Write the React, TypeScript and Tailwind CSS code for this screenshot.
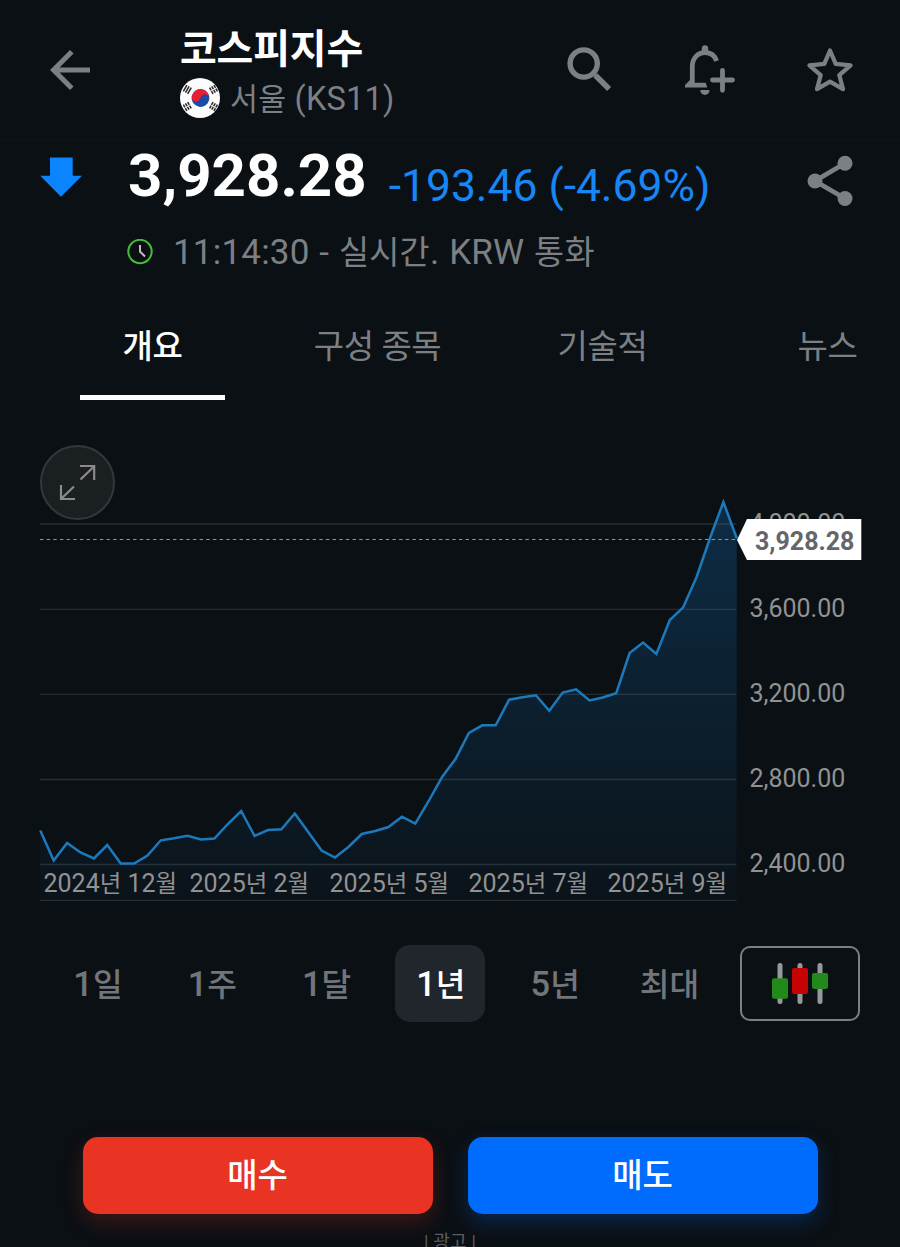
import type { ReactNode } from "react";

const priceLine = [
  830.5, 860.5, 843, 852.5, 858.5, 845, 863.5, 863.5, 855.5, 840.3, 838.3, 835.7, 839.5, 838.5, 824, 811, 836, 830,
  829.3, 813.5, 832, 850.5, 857.5, 847, 834, 831, 827, 816.7, 823.7, 801, 777, 759, 733, 725.3, 725.3, 699.7, 697.3,
  695.3, 710.7, 692.5, 689.3, 700.5, 697.5, 693.3, 653, 642.5, 654, 620, 607.3, 577, 538, 502, 538.5,
];

const CHART_TOP = 440;
const points = priceLine.map((y, i) => `${(40.3 + i * 13.394).toFixed(1)},${(y - CHART_TOP).toFixed(1)}`).join(" ");

const gridLines = [524, 609.3, 694.3, 779.5, 864.5, 900.3];
const yLabels: [string, number][] = [
  ["4,000.00", 532],
  ["3,600.00", 616.7],
  ["3,200.00", 701.8],
  ["2,800.00", 786.8],
  ["2,400.00", 872],
];
const xLabels: [string, string, number][] = [
  ["2024", "12", 43],
  ["2025", "2", 189],
  ["2025", "5", 329],
  ["2025", "7", 468],
  ["2025", "9", 607],
];

function BackIcon() {
  return (
    <svg viewBox="0 0 24 24" className="size-[60px] fill-[#7c8085]">
      <path d="M20 11H7.83l5.59-5.59L12 4l-8 8 8 8 1.41-1.41L7.83 13H20v-2z" />
    </svg>
  );
}

function SearchIcon() {
  return (
    <svg viewBox="560 40 60 60" className="size-[60px]" fill="none" stroke="#7c8085">
      <circle cx="583.7" cy="63.5" r="13.6" strokeWidth="5.4" />
      <path d="M592.500 72.500l3 3" strokeWidth="3" />
      <path d="M595.300 75.300l13.800 13.800" strokeWidth="5.600" />
    </svg>
  );
}

function BellPlusIcon() {
  return (
    <svg viewBox="680 40 60 60" className="size-[60px]" fill="none" stroke="#7c8085" strokeWidth="4.8">
      <path d="M705 48.5v3" strokeWidth="6.4" strokeLinecap="round" />
      <path d="M692.3 84V66.5C692.3 58 698 52.5 705 52.5c5.300 0 9.800 3 11.600 8.600" />
      <path d="M690 77.500v5.200h15.800l1.400 4.800H685v-2.500l5-5z" fill="#7c8085" stroke="none" />
      <path d="M700.300 90h9.200a4.600 5 0 0 1-9.200 0z" fill="#7c8085" stroke="none" />
      <path d="M722.500 70.300v20M712.500 80h20" strokeLinecap="round" />
    </svg>
  );
}

function StarIcon() {
  return (
    <svg viewBox="800 40 60 60" className="size-[60px]" fill="none" stroke="#7c8085" strokeWidth="4.2" strokeLinejoin="round">
      <path d="M830 50.500l5.700 13.400 14.900 1.400-11.300 9.800 3.700 14-13-7.400-13 7.400 3.700-14-11.300-9.800 14.900-1.400z" />
    </svg>
  );
}

function ShareIcon() {
  return (
    <svg viewBox="800 150 60 60" className="size-[60px] fill-[#7c8085]">
      <path d="M845 163.300L815 181l30 17.500" fill="none" stroke="#7c8085" strokeWidth="4.800" />
      <circle cx="845" cy="163.300" r="7.500" />
      <circle cx="815" cy="181" r="7.500" />
      <circle cx="845" cy="198.500" r="7.500" />
    </svg>
  );
}

function Trigram({ x, y, angle, broken }: { x: number; y: number; angle: number; broken: boolean }) {
  return (
    <g transform={`translate(${x} ${y}) rotate(${angle})`} stroke="#26282b" strokeWidth="1.5" strokeDasharray={broken ? "3.3 0.6" : undefined}>
      <path d="M-3.600-2.500h7.200M-3.600 0h7.200M-3.600 2.500h7.200" />
    </g>
  );
}

function KoreaFlag() {
  return (
    <svg viewBox="0 0 40 40" className="size-10">
      <circle cx="20" cy="20" r="20" fill="#fcfcfc" />
      <g transform="rotate(10 20.500 20)">
        <circle cx="20.500" cy="20" r="8.900" fill="#1b4aa6" />
        <path d="M11.600 20a8.900 8.900 0 0 1 17.800 0a4.450 4.450 0 0 0-8.900 0a4.450 4.450 0 0 1-8.900 0z" fill="#e8202f" />
      </g>
      <Trigram x={7.3} y={11.5} angle={-60} broken={false} />
      <Trigram x={33.5} y={11.5} angle={60} broken />
      <Trigram x={7.3} y={28.5} angle={60} broken />
      <Trigram x={33.5} y={28.5} angle={-60} broken />
    </svg>
  );
}

function CandlesIcon() {
  return (
    <svg viewBox="770 960 60 48" className="h-12 w-[60px]">
      <path d="M780 965.500v36M800 965.500v36M820 965.500v36" stroke="#98989a" strokeWidth="5" strokeLinecap="round" />
      <rect x="772" y="978.300" width="16" height="20.500" rx="2" fill="#218a1b" />
      <rect x="792" y="968" width="16" height="26" rx="2" fill="#c60303" />
      <rect x="812" y="973" width="16" height="16" rx="2" fill="#218a1b" />
    </svg>
  );
}

function Chart() {
  return (
    <svg viewBox="0 0 900 470" className="h-[470px] w-[900px]" fontSize="25" fill="#929292">
      <defs>
        <linearGradient id="area" x1="0" y1="60" x2="0" y2="460" gradientUnits="userSpaceOnUse">
          <stop offset="0" stopColor="#147acb" stopOpacity="0.27" />
          <stop offset="1" stopColor="#147acb" stopOpacity="0.03" />
        </linearGradient>
      </defs>
      <polygon points={`${points} 736.500,460 40,460`} fill="url(#area)" />
      {gridLines.map((y) => (
        <path key={y} d={`M40 ${y - CHART_TOP}H736.500`} stroke="#8a99a3" strokeOpacity="0.210" strokeWidth="1.300" />
      ))}
      <polyline points={points} fill="none" stroke="#1c7abc" strokeWidth="2.500" />
      <path d={`M40 ${539.5 - CHART_TOP}H737`} stroke="#92969a" strokeWidth="1.200" strokeDasharray="3.400 3.250" />
      {yLabels.map(([label, y]) => (
        <text key={label} x="749.500" y={y - CHART_TOP}>{label}</text>
      ))}
      {xLabels.map(([year, month, x]) => (
        <text key={x} x={x + 0.5} y={892 - CHART_TOP}>
          {year}<tspan className="text-[23.4px]">년</tspan> {month}<tspan className="text-[23.4px]">월</tspan>
        </text>
      ))}
      <path d="M737 100L747 79H861.300V120H747z" fill="#fff" />
      <text x="755" y="110" fontWeight="700" fill="#646669">3,928.28</text>
      <circle cx="77.500" cy="42.500" r="36.500" fill="#1a1f22" stroke="#33383b" strokeWidth="2" />
      <path d="M80 26H94.200V40M94 26.500L80.500 39.500M61 45V59H75M61.500 58.500L74 46.500" fill="none" stroke="#8b8b8b" strokeWidth="2.200" />
    </svg>
  );
}

function Ko({ children }: { children: ReactNode }) {
  return <span className="text-[0.935em]">{children}</span>;
}

function Tab({ children, active, className }: { children: ReactNode; active?: boolean; className: string }) {
  return (
    <button className={`flex h-[90px] justify-center border-b-[5px] pt-[17px] text-[33px] leading-[40px] tracking-[-0.4px] ${active ? "border-white font-medium text-white" : "border-transparent text-[#7c8085]"} ${className}`}>
      {children}
    </button>
  );
}

const ranges: [string, string][] = [["1", "일"], ["1", "주"], ["1", "달"], ["1", "년"], ["5", "년"], ["", "최대"]];

export default function App() {
  return (
    <main className="flex h-[1247px] w-[900px] flex-col overflow-hidden bg-[#0b1014] font-['Roboto','Noto_Sans_CJK_KR',sans-serif] whitespace-nowrap">
      <header className="flex h-[141px] shrink-0 border-b border-[#0f1418] pl-10">
        <button className="mt-10 size-[60px]"><BackIcon /></button>
        <div className="ml-20 flex w-[380px] flex-col">
          <h1 className="mt-[26px] text-[40px] leading-[48px] font-bold tracking-[-0.2px] text-white">코스피지수</h1>
          <div className="mt-1 flex h-10 items-center">
            <KoreaFlag />
            <span className="mt-0.5 ml-[10px] text-[32.5px] leading-10 tracking-[0.2px] text-[#7c8085]"><Ko>서울</Ko> (KS11)</span>
          </div>
        </div>
        <button className="mt-10 size-[60px]"><SearchIcon /></button>
        <button className="mt-10 ml-[60px] size-[60px]"><BellPlusIcon /></button>
        <button className="mt-10 ml-[60px] size-[60px]"><StarIcon /></button>
      </header>

      <section className="flex h-[169px] shrink-0 pl-10">
        <svg viewBox="0 0 42 40" className="mt-4 h-10 w-[42px] shrink-0 fill-[#0a84ff]">
          <path d="M10 .500h22.700v18.300H42L21 39.800.300 18.800H10z" />
        </svg>
        <div className="ml-[46px] flex w-[672px] flex-col">
          <div className="flex h-[80px] items-baseline">
            <span className="text-[60px] leading-[70px] font-bold text-white">3,928.28</span>
            <span className="ml-[22px] translate-y-[5px] text-[44.4px] text-[#1687f5]">-193.46 (-4.69%)</span>
          </div>
          <div className="mt-[11px] flex h-10 items-center">
            <svg viewBox="0 0 26 26" className="-ml-px size-[26px]" fill="none" strokeWidth="2">
              <circle cx="13" cy="12.500" r="11.700" stroke="#43bd3a" />
              <path d="M13 6v6.500l5 5" stroke="#c8b8c8" />
            </svg>
            <span className="mt-0.5 ml-[20px] text-[35px] leading-10 tracking-[0.2px] text-[#7c8085] [word-spacing:0.9px]">11:14:30 - <Ko>실시간</Ko>. KRW <Ko>통화</Ko></span>
          </div>
        </div>
        <button className="mt-[9px] size-[60px]"><ShareIcon /></button>
      </section>

      <nav className="flex h-[130px] shrink-0 pl-20">
        <Tab active className="w-[145px]">개요</Tab>
        <Tab className="ml-20 w-[145px]">구성 종목</Tab>
        <Tab className="ml-20 w-[145px]">기술적</Tab>
        <Tab className="ml-20 w-[145px]">뉴스</Tab>
      </nav>

      <section className="h-[470px] shrink-0"><Chart /></section>

      <section className="flex h-[147px] shrink-0 pt-[35px] pl-[52px]">
        <div className="flex w-[688px] gap-[24.300px]">
          {ranges.map(([count, unit]) => (
            <button
              key={count + unit}
              className={`flex h-[77px] w-[90px] shrink-0 items-baseline justify-center rounded-[15px] pt-[19px] pl-0.5 text-[34.5px] leading-[40px] font-medium ${count + unit === "1년" ? "bg-[#20262b] text-white" : "text-[#72767b]"}`}
            >
              <span>{count}<Ko>{unit}</Ko></span>
            </button>
          ))}
        </div>
        <button className="mt-px flex h-[75px] w-[120px] items-center justify-center rounded-[10px] border-2 border-[#7c8085]">
          <CandlesIcon />
        </button>
      </section>

      <section className="mt-[80px] flex shrink-0 gap-[35px] pl-[82.5px] text-[33px] font-medium text-white">
        <button className="h-[77px] w-[350px] rounded-[15px] bg-[#e93323] shadow-[0_8px_20px_rgba(233,51,35,0.22)]">매수</button>
        <button className="h-[77px] w-[350px] rounded-[15px] bg-[#006cfd] shadow-[0_8px_20px_rgba(0,108,253,0.25)]">매도</button>
      </section>
      <p className="mt-4 shrink-0 text-center text-[18px] leading-[24px] tracking-[0.2px] text-[#5a5e63]">| 광고 |</p>
    </main>
  );
}
